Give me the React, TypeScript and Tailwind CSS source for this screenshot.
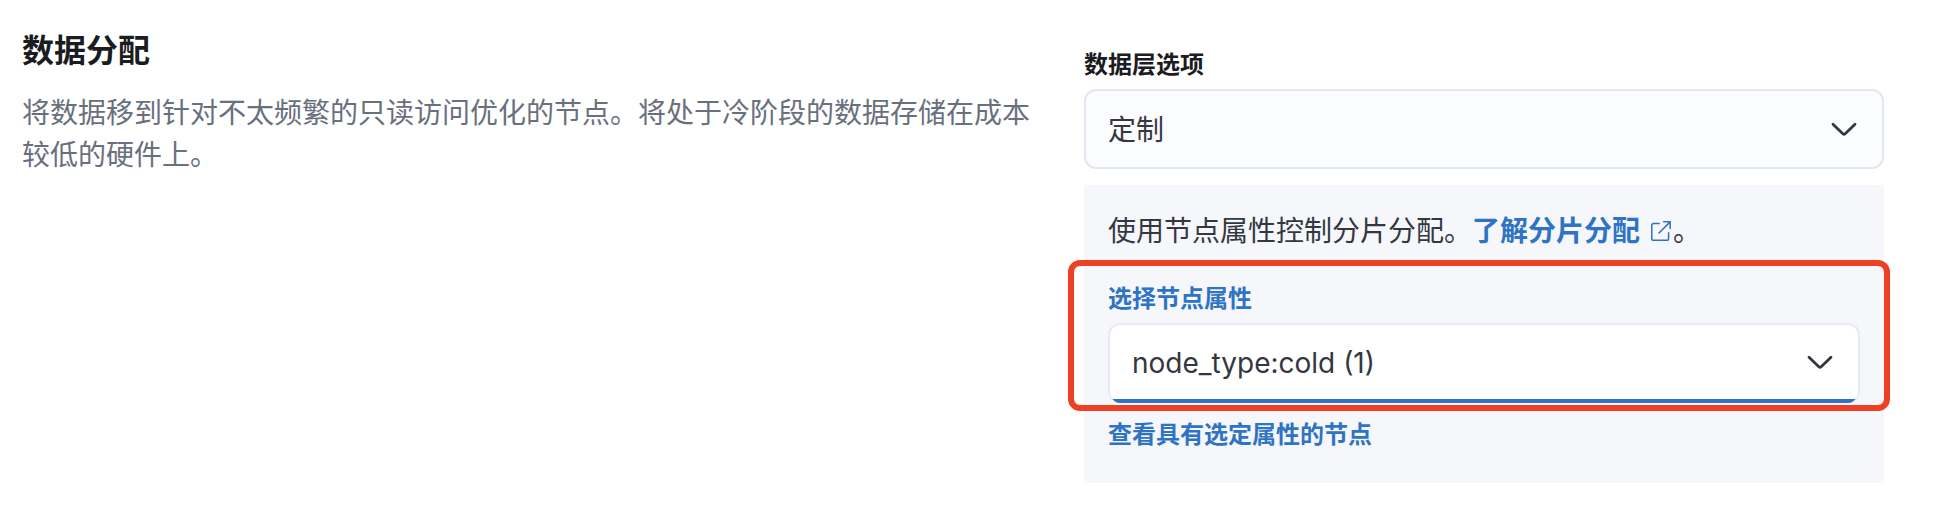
import type { ReactNode } from 'react';

function ChevronDown() {
  return (
    <svg viewBox="0 0 26 15" className="h-[15px] w-[26px] shrink-0" fill="none" stroke="#343741" strokeWidth="2.8" strokeLinecap="round" strokeLinejoin="round">
      <path d="M2 2.2 L12.1 11.9 Q13 12.7 13.9 11.9 L24 2.2" />
    </svg>
  );
}

function ExternalIcon() {
  return (
    <svg viewBox="0 0 20 20" className="h-5 w-5 shrink-0" fill="none" stroke="#2f73c4" strokeWidth="1.5" strokeLinecap="round" strokeLinejoin="round">
      <path d="M8.2 2.4 H2.6 Q0.8 2.4 0.8 4.2 V17.4 Q0.8 19.2 2.6 19.2 H15.8 Q17.6 19.2 17.6 17.4 V11.8" />
      <path d="M8 12 L19.1 0.9 M12.6 0.8 H19.2 V7.4" />
    </svg>
  );
}

function Label({ children, className }: { children: ReactNode; className: string }) {
  return <label className={`block text-2xl font-bold leading-9 ${className}`}>{children}</label>;
}

export default function App() {
  return (
    <main lang="zh-CN" className="flex h-[508px] w-[1954px] bg-white font-['Inter','Noto_Sans_CJK_SC',sans-serif] text-[28px] leading-[42px] text-[#343741]">
      <section className="w-[1084px] pl-[22px] pt-[27px]">
        <h2 className="text-[32px] font-bold leading-[48px] text-[#1a1c21]">数据分配</h2>
        <p className="mt-[17px] w-[1016px] text-[#69707d]">
          将数据移到针对不太频繁的只读访问优化的节点。将处于冷阶段的数据存储在成本较低的硬件上。
        </p>
      </section>

      <section className="w-[800px] pt-[47px]">
        <Label className="text-[#1a1c21]">数据层选项</Label>
        <div className="mt-1.5 flex h-20 items-center justify-between rounded-xl border-2 border-[#e1e6ef] bg-[#fbfcfd] pl-[22px] pr-[25px]">
          <span className="pt-0.5">定制</span>
          <ChevronDown />
        </div>

        <div className="mt-4 h-[298px] bg-[#f5f7fa] px-6 pt-[25px]">
          <p className="flex items-center whitespace-nowrap">
            <span>使用节点属性控制分片分配。</span>
            <a className="flex items-center font-bold text-[#2f73c4]">
              了解分片分配
              <span className="ml-[11px]"><ExternalIcon /></span>
            </a>
            <span className="ml-0.5">。</span>
          </p>

          <div className="relative mt-[29px]">
            <Label className="text-[#2f73c4]">选择节点属性</Label>
            <div className="mt-1.5 h-20 overflow-hidden rounded-xl border-2 border-b-0 border-[#e7eaf2] bg-white">
              <div className="flex h-[74px] items-center justify-between pl-[22px] pr-[25px]">
                <span className="pt-0.5 font-['Inter']">node_type:cold (1)</span>
                <ChevronDown />
              </div>
              <div className="-mx-0.5 h-1 bg-[#2f73c4]" />
            </div>
            <div className="pointer-events-none absolute -left-10 -top-[21.5px] h-[151px] w-[822px] rounded-xl border-[6px] border-[#ed4025]" />
          </div>

          <a className="mt-[14px] block text-2xl font-bold leading-9 text-[#2f73c4]">查看具有选定属性的节点</a>
        </div>
      </section>
    </main>
  );
}
